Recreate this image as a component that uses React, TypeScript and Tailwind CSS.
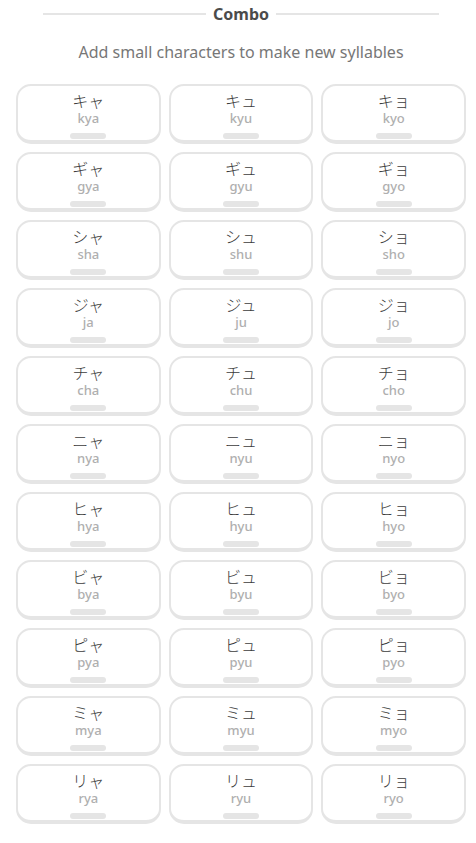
const rows: [string, string][][] = [
  [["キャ", "kya"], ["キュ", "kyu"], ["キョ", "kyo"]],
  [["ギャ", "gya"], ["ギュ", "gyu"], ["ギョ", "gyo"]],
  [["シャ", "sha"], ["シュ", "shu"], ["ショ", "sho"]],
  [["ジャ", "ja"], ["ジュ", "ju"], ["ジョ", "jo"]],
  [["チャ", "cha"], ["チュ", "chu"], ["チョ", "cho"]],
  [["ニャ", "nya"], ["ニュ", "nyu"], ["ニョ", "nyo"]],
  [["ヒャ", "hya"], ["ヒュ", "hyu"], ["ヒョ", "hyo"]],
  [["ビャ", "bya"], ["ビュ", "byu"], ["ビョ", "byo"]],
  [["ピャ", "pya"], ["ピュ", "pyu"], ["ピョ", "pyo"]],
  [["ミャ", "mya"], ["ミュ", "myu"], ["ミョ", "myo"]],
  [["リャ", "rya"], ["リュ", "ryu"], ["リョ", "ryo"]],
];

function KanaCard({ kana, romaji }: { kana: string; romaji: string }) {
  return (
    <div className="h-[60px] flex flex-col items-center pt-[6px] rounded-[15px] border-2 border-b-4 border-[#e5e5e5] bg-white">
      <span className="text-[16px] leading-[16px] font-light text-[#3c3c3c] [font-family:'Noto_Sans_CJK_JP',sans-serif]">
        {kana}
      </span>
      <span className="mt-[3px] text-[13px] leading-[14px] font-medium text-[#afafaf]">{romaji}</span>
      <div className="mt-[8px] w-9 h-[6px] rounded-full bg-[#e5e5e5]" />
    </div>
  );
}

export default function App() {
  return (
    <div className="min-h-screen bg-white pl-4 pr-[10px] pt-[4px] [font-family:'Noto_Sans',sans-serif]">
      {/* Section title */}
      <div className="flex items-center gap-[7px] px-[27px]">
        <div className="flex-1 h-[2px] bg-[#e5e5e5]" />
        <span className="text-[16px] leading-[20px] font-bold text-[#4b4b4b]">Combo</span>
        <div className="flex-1 h-[2px] bg-[#e5e5e5]" />
      </div>

      <p className="mt-[18px] text-center text-[16px] leading-[20px] text-[#777777]">
        Add small characters to make new syllables
      </p>

      <div className="mt-[22px] grid grid-cols-3 gap-2 pb-4">
        {rows.flat().map(([kana, romaji]) => (
          <KanaCard key={romaji} kana={kana} romaji={romaji} />
        ))}
      </div>
    </div>
  );
}
